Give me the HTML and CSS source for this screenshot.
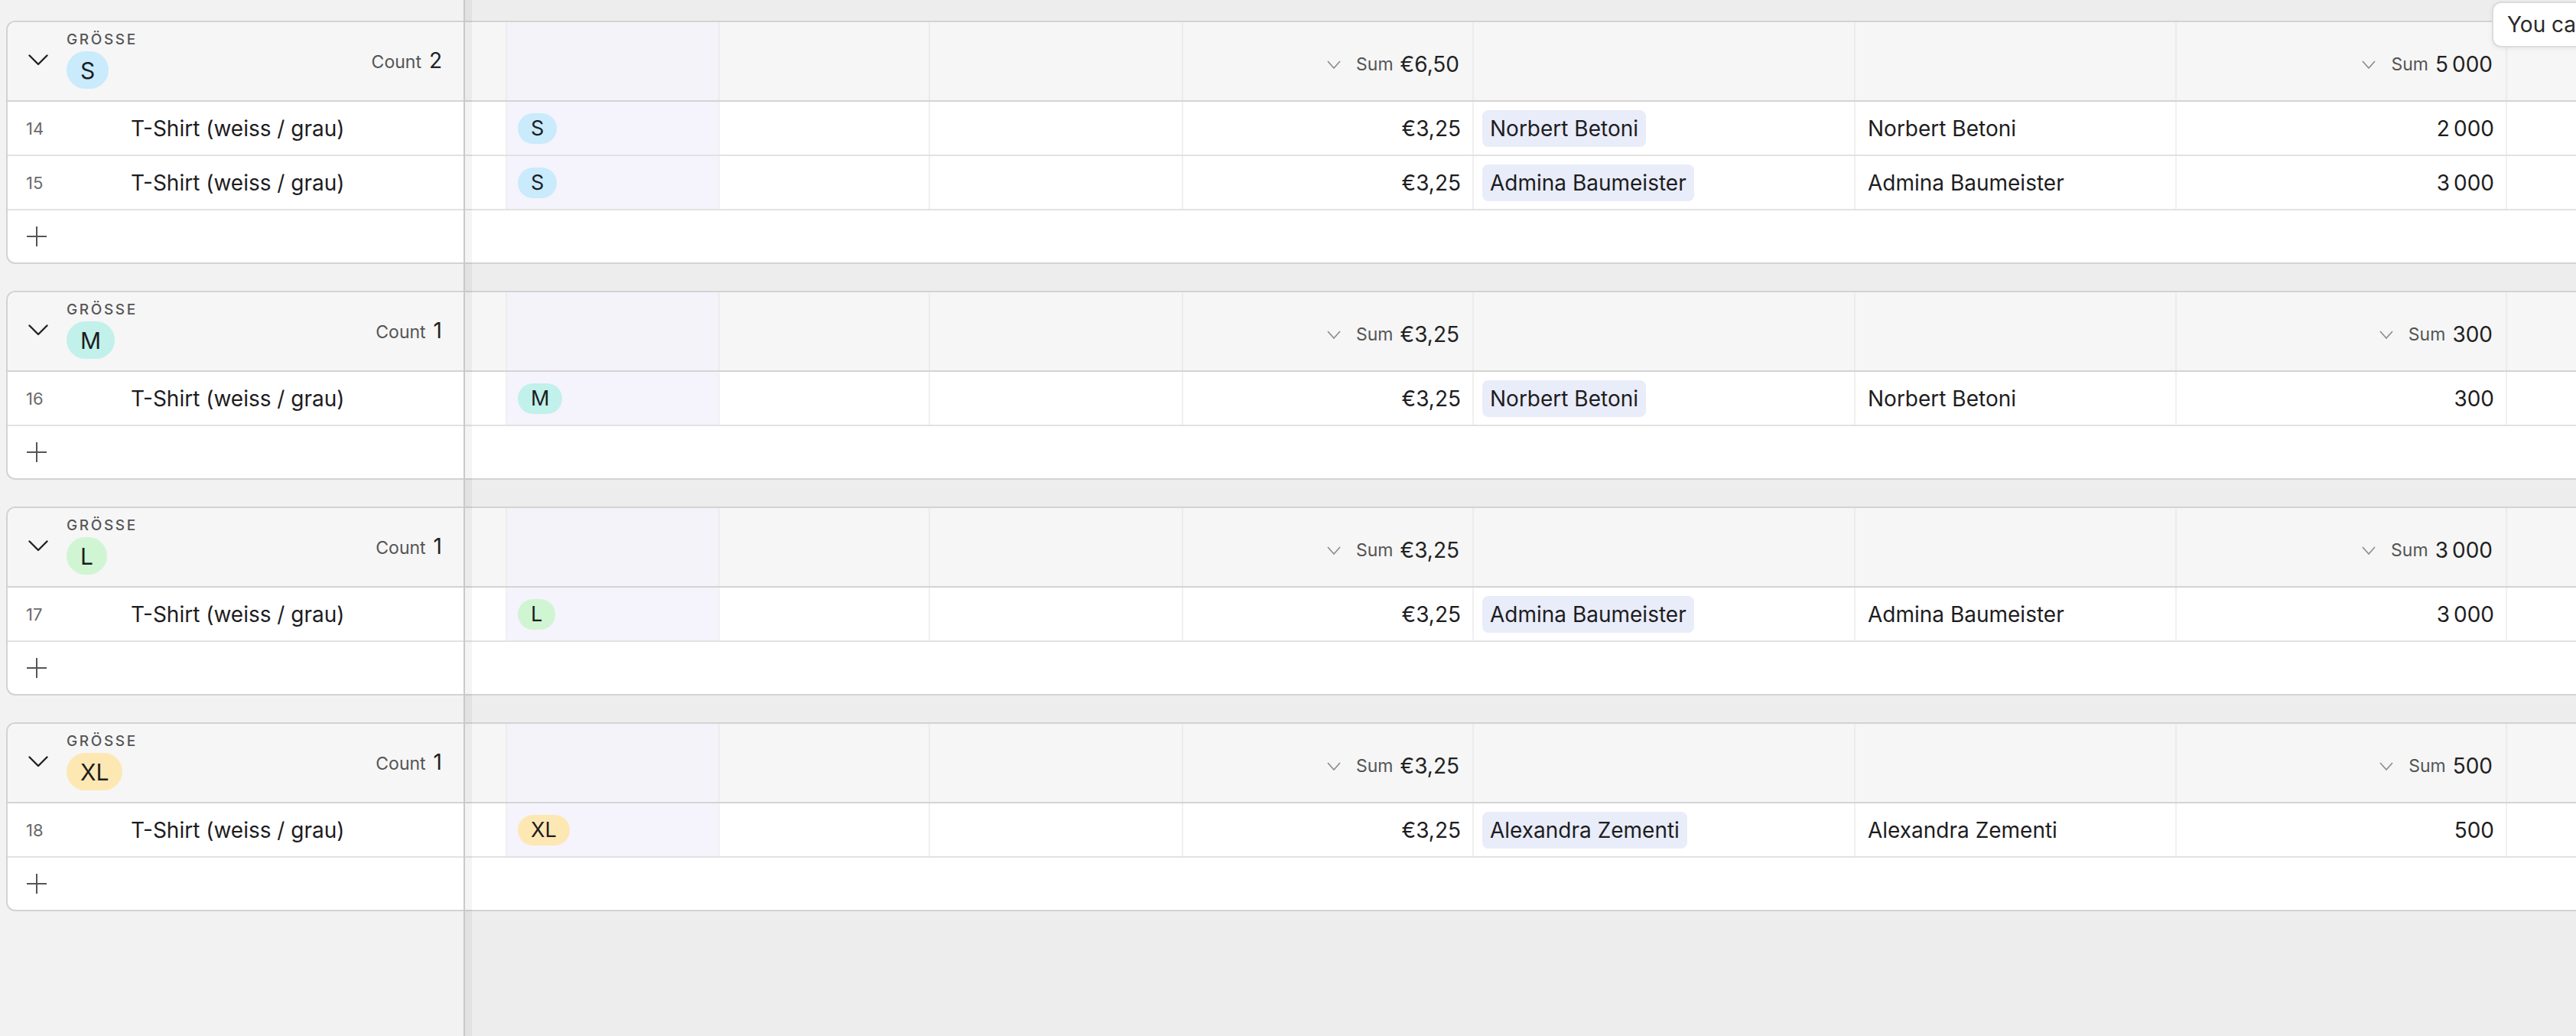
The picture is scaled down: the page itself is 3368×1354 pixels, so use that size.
FILE: index.html
```html
<!DOCTYPE html>
<html lang="de">
<head>
<meta charset="utf-8">
<title>Gruppierte Tabelle</title>
<link rel="stylesheet" href="styles.css">
</head>
<body>
<div class="sheet">

  <section class="group">
    <div class="row head">
      <div class="frozen head-frozen">
        <svg class="chev" viewBox="0 0 26 15" width="26" height="15"><polyline points="1.5,1.5 13,13 24.5,1.5"/></svg>
        <div class="group-label"><div class="field">GRÖSSE</div><span class="badge big b-s">S</span></div>
        <div class="count"><span class="lbl">Count</span><span class="val">2</span></div>
      </div>
      <div class="cell c1"></div>
      <div class="cell c2 size"></div>
      <div class="cell c3"></div>
      <div class="cell c4"></div>
      <div class="cell c5 sum"><svg class="schev" viewBox="0 0 18 11" width="18" height="11"><polyline points="1,1 9,10 17,1"/></svg><span class="lbl">Sum</span><span class="val">€6,50</span></div>
      <div class="cell c6"></div>
      <div class="cell c7"></div>
      <div class="cell c8 sum"><svg class="schev" viewBox="0 0 18 11" width="18" height="11"><polyline points="1,1 9,10 17,1"/></svg><span class="lbl">Sum</span><span class="val">5&#8239;000</span></div>
      <div class="cell c9"></div>
    </div>
    <div class="row data">
      <div class="frozen"><span class="num">14</span><span class="name">T-Shirt (weiss / grau)</span></div>
      <div class="cell c1"></div>
      <div class="cell c2 size"><span class="badge b-s">S</span></div>
      <div class="cell c3"></div>
      <div class="cell c4"></div>
      <div class="cell c5 right">€3,25</div>
      <div class="cell c6"><span class="chip">Norbert Betoni</span></div>
      <div class="cell c7 text">Norbert Betoni</div>
      <div class="cell c8 right">2&#8239;000</div>
      <div class="cell c9"></div>
    </div>
    <div class="row data">
      <div class="frozen"><span class="num">15</span><span class="name">T-Shirt (weiss / grau)</span></div>
      <div class="cell c1"></div>
      <div class="cell c2 size"><span class="badge b-s">S</span></div>
      <div class="cell c3"></div>
      <div class="cell c4"></div>
      <div class="cell c5 right">€3,25</div>
      <div class="cell c6"><span class="chip">Admina Baumeister</span></div>
      <div class="cell c7 text">Admina Baumeister</div>
      <div class="cell c8 right">3&#8239;000</div>
      <div class="cell c9"></div>
    </div>
    <div class="row add">
      <div class="frozen"><svg class="plus" viewBox="0 0 26 26" width="26" height="26"><path d="M13 0V26M0 13H26"/></svg></div>
    </div>
  </section>

  <section class="group">
    <div class="row head">
      <div class="frozen head-frozen">
        <svg class="chev" viewBox="0 0 26 15" width="26" height="15"><polyline points="1.5,1.5 13,13 24.5,1.5"/></svg>
        <div class="group-label"><div class="field">GRÖSSE</div><span class="badge big b-m">M</span></div>
        <div class="count"><span class="lbl">Count</span><span class="val">1</span></div>
      </div>
      <div class="cell c1"></div>
      <div class="cell c2 size"></div>
      <div class="cell c3"></div>
      <div class="cell c4"></div>
      <div class="cell c5 sum"><svg class="schev" viewBox="0 0 18 11" width="18" height="11"><polyline points="1,1 9,10 17,1"/></svg><span class="lbl">Sum</span><span class="val">€3,25</span></div>
      <div class="cell c6"></div>
      <div class="cell c7"></div>
      <div class="cell c8 sum"><svg class="schev" viewBox="0 0 18 11" width="18" height="11"><polyline points="1,1 9,10 17,1"/></svg><span class="lbl">Sum</span><span class="val">300</span></div>
      <div class="cell c9"></div>
    </div>
    <div class="row data">
      <div class="frozen"><span class="num">16</span><span class="name">T-Shirt (weiss / grau)</span></div>
      <div class="cell c1"></div>
      <div class="cell c2 size"><span class="badge b-m">M</span></div>
      <div class="cell c3"></div>
      <div class="cell c4"></div>
      <div class="cell c5 right">€3,25</div>
      <div class="cell c6"><span class="chip">Norbert Betoni</span></div>
      <div class="cell c7 text">Norbert Betoni</div>
      <div class="cell c8 right">300</div>
      <div class="cell c9"></div>
    </div>
    <div class="row add">
      <div class="frozen"><svg class="plus" viewBox="0 0 26 26" width="26" height="26"><path d="M13 0V26M0 13H26"/></svg></div>
    </div>
  </section>

  <section class="group">
    <div class="row head">
      <div class="frozen head-frozen">
        <svg class="chev" viewBox="0 0 26 15" width="26" height="15"><polyline points="1.5,1.5 13,13 24.5,1.5"/></svg>
        <div class="group-label"><div class="field">GRÖSSE</div><span class="badge big b-l">L</span></div>
        <div class="count"><span class="lbl">Count</span><span class="val">1</span></div>
      </div>
      <div class="cell c1"></div>
      <div class="cell c2 size"></div>
      <div class="cell c3"></div>
      <div class="cell c4"></div>
      <div class="cell c5 sum"><svg class="schev" viewBox="0 0 18 11" width="18" height="11"><polyline points="1,1 9,10 17,1"/></svg><span class="lbl">Sum</span><span class="val">€3,25</span></div>
      <div class="cell c6"></div>
      <div class="cell c7"></div>
      <div class="cell c8 sum"><svg class="schev" viewBox="0 0 18 11" width="18" height="11"><polyline points="1,1 9,10 17,1"/></svg><span class="lbl">Sum</span><span class="val">3&#8239;000</span></div>
      <div class="cell c9"></div>
    </div>
    <div class="row data">
      <div class="frozen"><span class="num">17</span><span class="name">T-Shirt (weiss / grau)</span></div>
      <div class="cell c1"></div>
      <div class="cell c2 size"><span class="badge b-l">L</span></div>
      <div class="cell c3"></div>
      <div class="cell c4"></div>
      <div class="cell c5 right">€3,25</div>
      <div class="cell c6"><span class="chip">Admina Baumeister</span></div>
      <div class="cell c7 text">Admina Baumeister</div>
      <div class="cell c8 right">3&#8239;000</div>
      <div class="cell c9"></div>
    </div>
    <div class="row add">
      <div class="frozen"><svg class="plus" viewBox="0 0 26 26" width="26" height="26"><path d="M13 0V26M0 13H26"/></svg></div>
    </div>
  </section>

  <section class="group">
    <div class="row head">
      <div class="frozen head-frozen">
        <svg class="chev" viewBox="0 0 26 15" width="26" height="15"><polyline points="1.5,1.5 13,13 24.5,1.5"/></svg>
        <div class="group-label"><div class="field">GRÖSSE</div><span class="badge big b-xl">XL</span></div>
        <div class="count"><span class="lbl">Count</span><span class="val">1</span></div>
      </div>
      <div class="cell c1"></div>
      <div class="cell c2 size"></div>
      <div class="cell c3"></div>
      <div class="cell c4"></div>
      <div class="cell c5 sum"><svg class="schev" viewBox="0 0 18 11" width="18" height="11"><polyline points="1,1 9,10 17,1"/></svg><span class="lbl">Sum</span><span class="val">€3,25</span></div>
      <div class="cell c6"></div>
      <div class="cell c7"></div>
      <div class="cell c8 sum"><svg class="schev" viewBox="0 0 18 11" width="18" height="11"><polyline points="1,1 9,10 17,1"/></svg><span class="lbl">Sum</span><span class="val">500</span></div>
      <div class="cell c9"></div>
    </div>
    <div class="row data">
      <div class="frozen"><span class="num">18</span><span class="name">T-Shirt (weiss / grau)</span></div>
      <div class="cell c1"></div>
      <div class="cell c2 size"><span class="badge b-xl">XL</span></div>
      <div class="cell c3"></div>
      <div class="cell c4"></div>
      <div class="cell c5 right">€3,25</div>
      <div class="cell c6"><span class="chip">Alexandra Zementi</span></div>
      <div class="cell c7 text">Alexandra Zementi</div>
      <div class="cell c8 right">500</div>
      <div class="cell c9"></div>
    </div>
    <div class="row add">
      <div class="frozen"><svg class="plus" viewBox="0 0 26 26" width="26" height="26"><path d="M13 0V26M0 13H26"/></svg></div>
    </div>
  </section>

</div>
<div class="frozen-edge"></div>
<div class="tooltip">You can drag the column edge to resize it</div>
</body>
</html>
```

FILE: styles.css
```css
html, body {
  margin: 0;
  padding: 0;
  height: 100%;
}
body {
  overflow: hidden;
  position: relative;
  font-family: Inter, "Noto Sans", "Liberation Sans", sans-serif;
  color: #1d1d1f;
  background: linear-gradient(to right, #f2f2f2 0, #f2f2f2 606px, #ededed 606px);
}
.sheet {
  width: 3500px;
  padding: 27px 0 0 8px;
  display: flex;
  flex-direction: column;
  gap: 35px;
}
.group {
  border: 2px solid #d3d3d3;
  border-right: none;
  border-radius: 12px 0 0 12px;
  background: #fff;
  overflow: hidden;
}
.row {
  display: flex;
  box-sizing: border-box;
}
.row.head {
  height: 104px;
  background: #f6f6f6;
  border-bottom: 2px solid #d4d4d4;
}
.row.data {
  height: 71px;
  border-bottom: 2px solid #e2e2e2;
}
.row.add {
  height: 68px;
}
.frozen {
  width: 598px;
  flex: none;
  box-sizing: border-box;
  display: flex;
  align-items: center;
}
.head-frozen {
  padding-left: 27px;
}
.chev {
  fill: none;
  stroke: #222;
  stroke-width: 2.4;
  stroke-linecap: round;
  stroke-linejoin: round;
  margin-top: -4px;
}
.group-label {
  display: flex;
  flex-direction: column;
  align-items: flex-start;
  margin-left: 24px;
  margin-top: -3px;
}
.field {
  font-size: 19px;
  font-weight: 500;
  letter-spacing: 2.6px;
  color: #555;
  line-height: 22px;
  margin-bottom: 4px;
}
.count {
  margin-left: auto;
  margin-right: 30px;
  display: flex;
  align-items: baseline;
  gap: 10px;
  margin-top: -2px;
}
.count .lbl, .sum .lbl {
  font-size: 23px;
  color: #555;
}
.count .val, .sum .val {
  font-size: 28px;
  color: #222;
}
.badge {
  display: inline-flex;
  align-items: center;
  justify-content: center;
  height: 40px;
  padding: 0 17px;
  border-radius: 20px;
  font-size: 27px;
  color: #1d1d1f;
}
.badge.big {
  height: 49px;
  padding: 0 18px;
  border-radius: 25px;
  font-size: 30px;
}
.b-s { background: #c9ebfc; }
.b-m { background: #c1f1ea; }
.b-l { background: #d0f5d3; }
.b-xl { background: #fde8b4; }

.num {
  margin-left: 24px;
  width: 137px;
  font-size: 22px;
  color: #6b6b6b;
}
.name {
  font-size: 28px;
  color: #1d1d1f;
}
.plus {
  margin-left: 25px;
  fill: none;
  stroke: #555;
  stroke-width: 2;
}
.cell {
  flex: none;
  box-sizing: border-box;
  height: 100%;
  border-right: 2px solid #ececec;
  display: flex;
  align-items: center;
  font-size: 28px;
}
.row.data .cell {
  border-right-color: #f0f0f0;
}
.c1 { width: 55px; }
.c2 { width: 278px; }
.c3 { width: 275px; }
.c4 { width: 331px; }
.c5 { width: 380px; }
.c6 { width: 499px; }
.c7 { width: 420px; }
.c8 { width: 432px; }
.c9 { width: 300px; border-right: none; }
.row.head .size { background: #f5f3fa; }
.row.data .size { background: #f5f3fc; padding-left: 14px; }
.right {
  justify-content: flex-end;
  padding-right: 15px;
}
.text {
  padding-left: 16px;
}
.row.data .c6 {
  padding-left: 11px;
}
.chip {
  background: #e9ecf9;
  border-radius: 8px;
  height: 48px;
  padding: 0 10px;
  display: inline-flex;
  align-items: center;
  font-size: 28px;
}
.sum {
  justify-content: flex-end;
  padding-right: 17px;
  padding-top: 8px;
}
.sum .lbl {
  margin-right: 9px;
}
.schev {
  fill: none;
  stroke: #8a8a8a;
  stroke-width: 1.6;
  margin-right: 20px;
}
.frozen-edge {
  position: absolute;
  left: 606px;
  top: 0;
  bottom: 0;
  width: 2px;
  background: #c9c9c9;
}
.frozen-edge::after {
  content: "";
  position: absolute;
  left: 2px;
  top: 0;
  bottom: 0;
  width: 9px;
  background: rgba(0, 0, 0, 0.045);
}
.tooltip {
  position: absolute;
  left: 3258px;
  top: 2px;
  height: 60px;
  box-sizing: border-box;
  padding: 0 18px;
  display: flex;
  align-items: center;
  background: #fff;
  border: 2px solid #dcdcdc;
  border-radius: 12px;
  box-shadow: 0 2px 6px rgba(0, 0, 0, 0.06);
  font-size: 28px;
  color: #2a2a2a;
  white-space: nowrap;
}
```
